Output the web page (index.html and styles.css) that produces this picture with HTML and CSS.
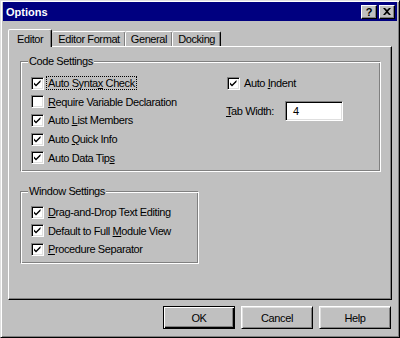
FILE: index.html
```html
<!doctype html>
<html lang="en">
<head>
    <meta charset="utf-8">
    <title>Options</title>
    <link rel="stylesheet" href="styles.css">
</head>
<body>
    <div class="window">
        <!-- Title bar -->
        <div class="titlebar">
            <span class="title">Options</span>
            <div class="title-buttons">
                <span class="title-btn">?</span>
                <span class="title-btn close">
                    <svg width="8" height="7" viewBox="0 0 8 7"><path d="M0 0h2l2 2 2-2h2L5 3.5 8 7H6L4 5 2 7H0l3-3.5z" fill="#000"/></svg>
                </span>
            </div>
        </div>

        <!-- Tabs -->
        <div class="tabs">
            <span class="tab active">Editor</span>
            <span class="tab">Editor Format</span>
            <span class="tab">General</span>
            <span class="tab">Docking</span>
        </div>

        <div class="panel">
            <fieldset class="group code">
                <legend>Code Settings</legend>
                <div class="code-grid">
                    <div class="col">
                        <label class="check"><span class="box on"></span><span class="focus">Auto Synta<u>x</u> Check</span></label>
                        <label class="check"><span class="box"></span><span><u>R</u>equire Variable Declaration</span></label>
                        <label class="check"><span class="box on"></span><span>Auto <u>L</u>ist Members</span></label>
                        <label class="check"><span class="box on"></span><span>Auto <u>Q</u>uick Info</span></label>
                        <label class="check"><span class="box on"></span><span>Auto Data Tip<u>s</u></span></label>
                    </div>
                    <div class="col">
                        <label class="check"><span class="box on"></span><span>Auto <u>I</u>ndent</span></label>
                        <div class="field">
                            <span class="field-label"><u>T</u>ab Width:</span>
                            <span class="input">4</span>
                        </div>
                    </div>
                </div>
            </fieldset>

            <fieldset class="group window-set">
                <legend>Window Settings</legend>
                <label class="check"><span class="box on"></span><span><u>D</u>rag-and-Drop Text Editing</span></label>
                <label class="check"><span class="box on"></span><span>Default to Full <u>M</u>odule View</span></label>
                <label class="check"><span class="box on"></span><span><u>P</u>rocedure Separator</span></label>
            </fieldset>
        </div>

        <!-- Botones -->
        <div class="buttons">
            <span class="button default">OK</span>
            <span class="button">Cancel</span>
            <span class="button">Help</span>
        </div>
    </div>
</body>
</html>
```

FILE: styles.css
```css
:root {
    --face: #c0c0c0;
    --light: #dfdfdf;
    --shadow: #808080;
    --dark: #000000;
    --navy: #000080;
}

body {
    margin: 0;
    font-family: "Liberation Sans", Arial, sans-serif;
    font-size: 11px;
    letter-spacing: -0.4px;
    color: #000;
}

.window {
    width: 400px;
    height: 338px;
    box-sizing: border-box;
    background: var(--face);
    border: 1px solid;
    border-color: var(--light) var(--dark) var(--dark) var(--light);
    box-shadow: inset 1px 1px #fff, inset -1px -1px var(--shadow);
    padding: 1px 2px 2px 2px;
    display: flex;
    flex-direction: column;
}

.titlebar {
    height: 19px;
    background: var(--navy);
    color: #fff;
    display: flex;
    align-items: center;
    justify-content: space-between;
    padding: 0 2px 0 3px;
}

.title {
    font-weight: bold;
    letter-spacing: 0;
}

.title-buttons {
    display: flex;
    gap: 2px;
}

.title-btn {
    width: 16px;
    height: 14px;
    box-sizing: border-box;
    background: var(--face);
    color: #000;
    font-weight: bold;
    font-size: 11px;
    letter-spacing: 0;
    display: flex;
    align-items: center;
    justify-content: center;
    border: 1px solid;
    border-color: #fff var(--dark) var(--dark) #fff;
    box-shadow: inset -1px -1px var(--shadow);
}

.tabs {
    display: flex;
    align-items: flex-end;
    height: 17px;
    margin: 8px 0 0 5px;
    position: relative;
    z-index: 1;
}

.tab {
    height: 15px;
    box-sizing: border-box;
    padding: 0 5px;
    display: flex;
    align-items: center;
    border: 1px solid;
    border-bottom: none;
    border-color: #fff var(--dark) transparent #fff;
    box-shadow: inset -1px 0 var(--shadow);
    border-radius: 2px 2px 0 0;
}

.tab.active {
    height: 18px;
    margin-bottom: -1px;
    padding: 0 8px;
    background: var(--face);
}

.tab + .tab {
    margin-left: -1px;
}

.tab.active + .tab {
    border-left: none;
    margin-left: 0;
    padding-left: 6px;
}

.panel {
    height: 254px;
    box-sizing: border-box;
    margin: 0 5px;
    border: 1px solid;
    border-color: #fff var(--dark) var(--dark) #fff;
    box-shadow: inset -1px -1px var(--shadow);
    padding: 0 0 0 11px;
}

.group {
    margin: 0;
    border: 1px solid var(--shadow);
    border-right-color: #fff;
    border-bottom-color: #fff;
    box-shadow: inset 1px 1px #fff, inset -1px -1px var(--shadow);
    padding: 0 0 0 10px;
}

.group legend {
    padding: 0 1px;
    margin-left: -3px;
    background: var(--face);
    line-height: 13px;
}

.group.code {
    width: 361px;
    box-sizing: border-box;
    margin-top: 8px;
    padding-top: 6px;
    padding-bottom: 4px;
}

.group.window-set {
    width: 179px;
    box-sizing: border-box;
    margin-top: 13px;
    padding-top: 5px;
    padding-bottom: 4px;
}

.code-grid {
    display: grid;
    grid-template-columns: 196px auto;
}

.check {
    display: flex;
    align-items: center;
    height: 18.6px;
    gap: 4px;
    white-space: nowrap;
}

.box {
    width: 13px;
    height: 13px;
    box-sizing: border-box;
    background: #fff;
    border: 1px solid;
    border-color: var(--shadow) #fff #fff var(--shadow);
    box-shadow: inset 1px 1px var(--dark), inset -1px -1px var(--light);
    flex: none;
}

.box.on {
    background: #fff url("data:image/svg+xml,%3Csvg xmlns='http://www.w3.org/2000/svg' width='11' height='11'%3E%3Cpath d='M2 4.5l2 2 4.5-4.5v2L4 8.5 2 6.5z' fill='%23000'/%3E%3C/svg%3E") no-repeat 0 0;
}

.focus {
    outline: 1px dotted #000;
    outline-offset: 0;
    padding: 0 1px;
    margin-left: -1px;
}

.field {
    display: flex;
    align-items: center;
    margin-top: 8px;
    margin-left: -1px;
}

.field-label {
    width: 59px;
}

.input {
    width: 58px;
    height: 20px;
    box-sizing: border-box;
    background: #fff;
    border: 1px solid;
    border-color: var(--shadow) #fff #fff var(--shadow);
    box-shadow: inset 1px 1px var(--dark), inset -1px -1px var(--light);
    padding-left: 7px;
    display: flex;
    align-items: center;
}

.buttons {
    display: flex;
    justify-content: flex-end;
    gap: 6px;
    margin: 6px 6px 0 0;
}

.button {
    width: 72px;
    height: 23px;
    box-sizing: border-box;
    display: flex;
    align-items: center;
    justify-content: center;
    border: 1px solid;
    border-color: #fff var(--dark) var(--dark) #fff;
    box-shadow: inset 1px 1px var(--light), inset -1px -1px var(--shadow);
}

.button.default {
    border-color: var(--dark);
    box-shadow: inset 1px 1px #fff, inset -1px -1px var(--dark), inset -2px -2px var(--shadow);
}

u {
    text-decoration-thickness: 1px;
    text-underline-offset: 1px;
}
```
